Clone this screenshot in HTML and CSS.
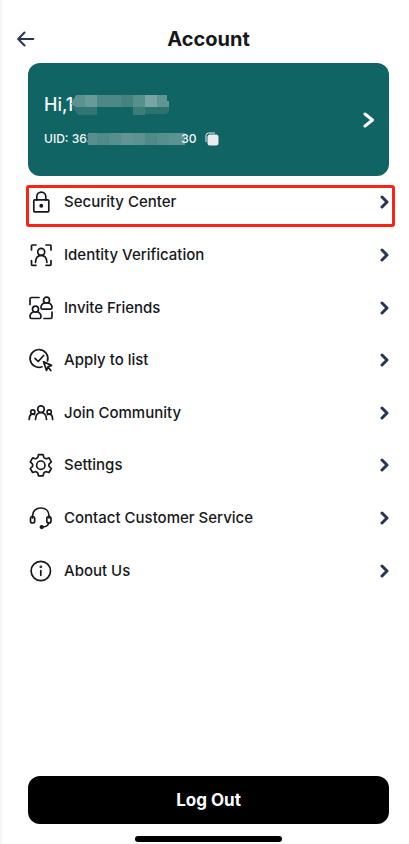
FILE: index.html
```html
<!DOCTYPE html>
<html lang="en">
<head>
<meta charset="utf-8">
<meta name="viewport" content="width=device-width, initial-scale=1">
<title>Account</title>
<link rel="stylesheet" href="styles.css">
</head>
<body>
<div class="page">
  <header class="header">
    <button class="back" type="button" aria-label="Back">
      <svg width="18" height="16" viewBox="0 0 18 16"><path d="M16.300 8H1.500M7.500 1.500L1.200 8l6.300 6.500"/></svg>
    </button>
    <h1 class="title">Account</h1>
  </header>

  <main class="main">
    <a class="card" href="#profile">
      <span class="card-text">
        <span class="name">Hi,13<svg class="mask mask-name" width="98" height="20" viewBox="0 0 98 20" shape-rendering="crispEdges"><path fill="#5b928f" d="M5 0h9v12H5L0 9z"/><path fill="#689a98" d="M14 0h12v12H14z"/><path fill="#4c8886" d="M26 0h24v12H26z"/><path fill="#448280" d="M50 0h12v12H50z"/><path fill="#56908d" d="M62 0h12v12H62z"/><path fill="#76a5a3" d="M74 0h12v12H74z"/><path fill="#5f9694" d="M86 0h10v6h2v6H86z"/><path fill="#307674" d="M2 12h24v8H7z"/><path fill="#3a7d7b" d="M62 12h12v8H62z"/><path fill="#2b7270" d="M74 12h24v5l-3 2H74z"/></svg></span>
        <span class="uid">UID: 363<svg class="mask mask-uid" width="97" height="12" viewBox="0 0 97 12" shape-rendering="crispEdges"><path fill="#568f8d" d="M0 0h97v12H0z"/><path fill="#4e8a88" d="M9 0h12v12H9zM57 0h12v12H57z"/><path fill="#609593" d="M33 0h12v12H33z"/><path fill="#5c9391" d="M45 0h12v12H45zM81 0h16v12H81z"/></svg>30<svg class="copy" width="14" height="14" viewBox="0 0 14 14"><path fill="none" stroke="#ecebf0" d="M1 10V3.500Q1 1 3.500 1H10"/><rect x="2.500" y="2.500" width="11" height="11" rx="2.500" fill="#ecebf0"/></svg></span>
      </span>
      <svg class="card-arrow" width="12" height="16" viewBox="0 0 12 16"><path d="M3 2l7.500 6L3 14"/></svg>
    </a>

    <nav class="list" aria-label="Account menu">
      <a class="row marked" href="#security">
        <svg class="icon" viewBox="0 0 24 24"><path d="M8.800 10V6.600a4.500 4.500 0 0 1 9 0V10"/><rect x="5.800" y="9.800" width="15" height="12" rx="1"/><circle cx="13.300" cy="15.800" r="1.100" fill="#17181c"/></svg>
        <span class="label">Security Center</span>
        <svg class="arrow" viewBox="0 0 9 14"><path d="M2 2l5 5-5 5"/></svg>
      </a>
      <a class="row" href="#identity">
        <svg class="icon" viewBox="0 0 24 24"><path d="M3.500 7V2.800Q3.500 2 4.300 2H8M18 2h4.200q.8 0 .8.800V7M3.500 17.500v4q0 .8.800.8H8M18 22.300h4.200q.8 0 .8-.8v-4"/><circle cx="13.200" cy="8.800" r="3.500"/><path d="M7.500 19.500c.2-4.500 2.400-7.200 5.700-7.200s5.500 2.700 5.700 7.200"/></svg>
        <span class="label">Identity Verification</span>
        <svg class="arrow" viewBox="0 0 9 14"><path d="M2 2l5 5-5 5"/></svg>
      </a>
      <a class="row" href="#invite">
        <svg class="icon" viewBox="0 0 24 24"><path d="M2 8.500V3q0-1.500 1.500-1.500h7.500M24 16v5q0 1.500-1.500 1.500H16"/><circle cx="18.500" cy="4.200" r="3"/><path d="M16.700 6.800c-2.500 1-3.900 3-3.700 5.200q.1 1.200 1.500 1.200h8q1.400 0 1.500-1.200c.2-2.200-1.200-4.200-3.700-5.200"/><circle cx="7.500" cy="13.200" r="3"/><path d="M5.700 15.800c-2.500 1-3.900 3-3.700 5.200q.1 1.500 1.500 1.500h8q1.400 0 1.500-1.500c.2-2.200-1.200-4.200-3.700-5.200"/></svg>
        <span class="label">Invite Friends</span>
        <svg class="arrow" viewBox="0 0 9 14"><path d="M2 2l5 5-5 5"/></svg>
      </a>
      <a class="row" href="#apply">
        <svg class="icon" viewBox="0 0 24 24"><path d="M14 18.800A8.900 8.900 0 1 1 19.500 13M7 10.300l3.200 3.200 5.500-6"/><path d="M15.500 13.800l8 3.600-3.500 1.400-1.500 3.600zM20.500 19.500l2.300 3"/></svg>
        <span class="label">Apply to list</span>
        <svg class="arrow" viewBox="0 0 9 14"><path d="M2 2l5 5-5 5"/></svg>
      </a>
      <a class="row" href="#community">
        <svg class="icon" viewBox="0 0 24 24"><circle cx="13" cy="8.200" r="3.300"/><path d="M7.500 18.500c.2-4.500 2.300-7 5.500-7s5.300 2.500 5.500 7"/><circle cx="4.800" cy="11" r="2.100"/><circle cx="21.200" cy="11" r="2.100"/><path d="M1.200 18.500c0-3.400 1.300-5.400 3.600-5.400q1 0 1.700.5M24.600 18.500c0-3.400-1.200-5.400-3.400-5.400q-1 0-1.700.5"/></svg>
        <span class="label">Join Community</span>
        <svg class="arrow" viewBox="0 0 9 14"><path d="M2 2l5 5-5 5"/></svg>
      </a>
      <a class="row" href="#settings">
        <svg class="icon" viewBox="0 0 24 24"><path d="M10.500 1.600h4.600l.7 2.600q.2.600.8.900l.7.400q.6.300 1.100.2l2.600-.8 2.300 4-2 1.900q-.4.400-.4 1v.8q0 .6.400 1l2 1.900-2.300 4-2.600-.8q-.5-.1-1.100.2l-.7.400q-.6.300-.8.900l-.7 2.600h-4.600l-.7-2.600q-.2-.6-.8-.9l-.7-.4q-.6-.3-1.100-.2l-2.600.8-2.300-4 2-1.900q.4-.4.400-1v-.8q0-.6-.4-1l-2-1.900 2.300-4 2.600.8q.5.100 1.100-.2l.7-.4q.6-.3.800-.9z"/><circle cx="12.800" cy="12.200" r="4.200"/></svg>
        <span class="label">Settings</span>
        <svg class="arrow" viewBox="0 0 9 14"><path d="M2 2l5 5-5 5"/></svg>
      </a>
      <a class="row" href="#service">
        <svg class="icon" viewBox="0 0 24 24"><path d="M4.500 12V10C4.500 5 8 2 12.800 2S21 5 21 10V12M20.800 16.500c-.4 2.700-2.400 4.200-6 4.500"/><rect x="2.500" y="10.500" width="4.200" height="6.500" rx="2.100"/><rect x="18.800" y="10.500" width="4.200" height="6.500" rx="2.100"/><circle cx="13.700" cy="21.100" r="1.300" fill="#17181c"/></svg>
        <span class="label">Contact Customer Service</span>
        <svg class="arrow" viewBox="0 0 9 14"><path d="M2 2l5 5-5 5"/></svg>
      </a>
      <a class="row" href="#about">
        <svg class="icon" viewBox="0 0 24 24"><circle cx="12.800" cy="12" r="9.700"/><path d="M12.800 11.500v4.800"/><circle cx="12.800" cy="7.800" r=".5"/></svg>
        <span class="label">About Us</span>
        <svg class="arrow" viewBox="0 0 9 14"><path d="M2 2l5 5-5 5"/></svg>
      </a>
    </nav>
  </main>

  <footer class="footer">
    <button class="logout" type="button">Log Out</button>
    <div class="home-bar"></div>
  </footer>
</div>
</body>
</html>
```
FILE: styles.css
```css
* {
  box-sizing: border-box;
}

body {
  margin: 0;
  background: #fff;
  color: #17181c;
  font-family: Inter, "Liberation Sans", sans-serif;
}

a {
  color: inherit;
  text-decoration: none;
}

button {
  border: 0;
  padding: 0;
  font: inherit;
  cursor: pointer;
}

svg {
  flex: none;
}

.page {
  display: flex;
  flex-direction: column;
  min-height: 100vh;
  padding: 24px 20px 2px 26px;
  border-left: 2px solid #f5f5f5;
}

.header {
  position: relative;
  display: flex;
  align-items: center;
  justify-content: center;
  height: 30px;
  margin-bottom: 9px;
}

.back {
  position: absolute;
  left: -12px;
  display: flex;
  padding: 7px 1px;
  background: none;
}

.back path {
  fill: none;
  stroke: #2a3553;
  stroke-width: 2;
  stroke-linecap: round;
  stroke-linejoin: round;
}

.title {
  margin: 0;
  font-size: 20px;
  line-height: 30px;
  font-weight: 700;
}

.card {
  display: flex;
  align-items: center;
  justify-content: space-between;
  padding: 27px 15px 27px 16px;
  border-radius: 12px;
  background: #106463;
  color: #f4f7f7;
}

.card-text {
  display: flex;
  flex-direction: column;
  gap: 9px;
}

.name,
.uid {
  display: flex;
  align-items: center;
}

.name {
  font-size: 18px;
  line-height: 30px;
  font-weight: 500;
}

.uid {
  font-size: 12px;
  line-height: 20px;
  font-weight: 500;
}

.mask-name {
  margin-left: -14px;
}

.mask-uid {
  margin: 0 -4px 0 -6px;
}

.copy {
  margin-left: 8px;
}

.card-arrow path,
.arrow path {
  fill: none;
  stroke: #fff;
  stroke-width: 3;
  stroke-linecap: round;
  stroke-linejoin: round;
}

.list {
  display: grid;
  grid-auto-rows: 1fr;
  min-height: 421px;
}

.row {
  position: relative;
  display: flex;
  align-items: center;
  gap: 12px;
}

/* Red frame drawn over the highlighted entry */
.marked::after {
  content: "";
  position: absolute;
  inset: 9px -6px 2px -2px;
  border: 3px solid #fb2414;
  border-radius: 3px;
}

.icon {
  width: 24px;
  height: 24px;
  overflow: visible;
  fill: none;
  stroke: #17181c;
  stroke-width: 1.7;
  stroke-linecap: round;
  stroke-linejoin: round;
}

.label {
  flex: 1;
  font-size: 15px;
  line-height: 24px;
  font-weight: 500;
}

.arrow {
  width: 9px;
  height: 14px;
}

.arrow path {
  stroke: #2a3553;
}

.footer {
  display: flex;
  flex-direction: column;
  align-items: center;
  gap: 12px;
  margin-top: auto;
}

.logout {
  width: 100%;
  height: 48px;
  border-radius: 12px;
  background: #000;
  color: #fff;
  font-size: 17px;
  font-weight: 700;
}

.home-bar {
  width: 147px;
  height: 6px;
  border-radius: 3px;
  background: #000;
}
```
